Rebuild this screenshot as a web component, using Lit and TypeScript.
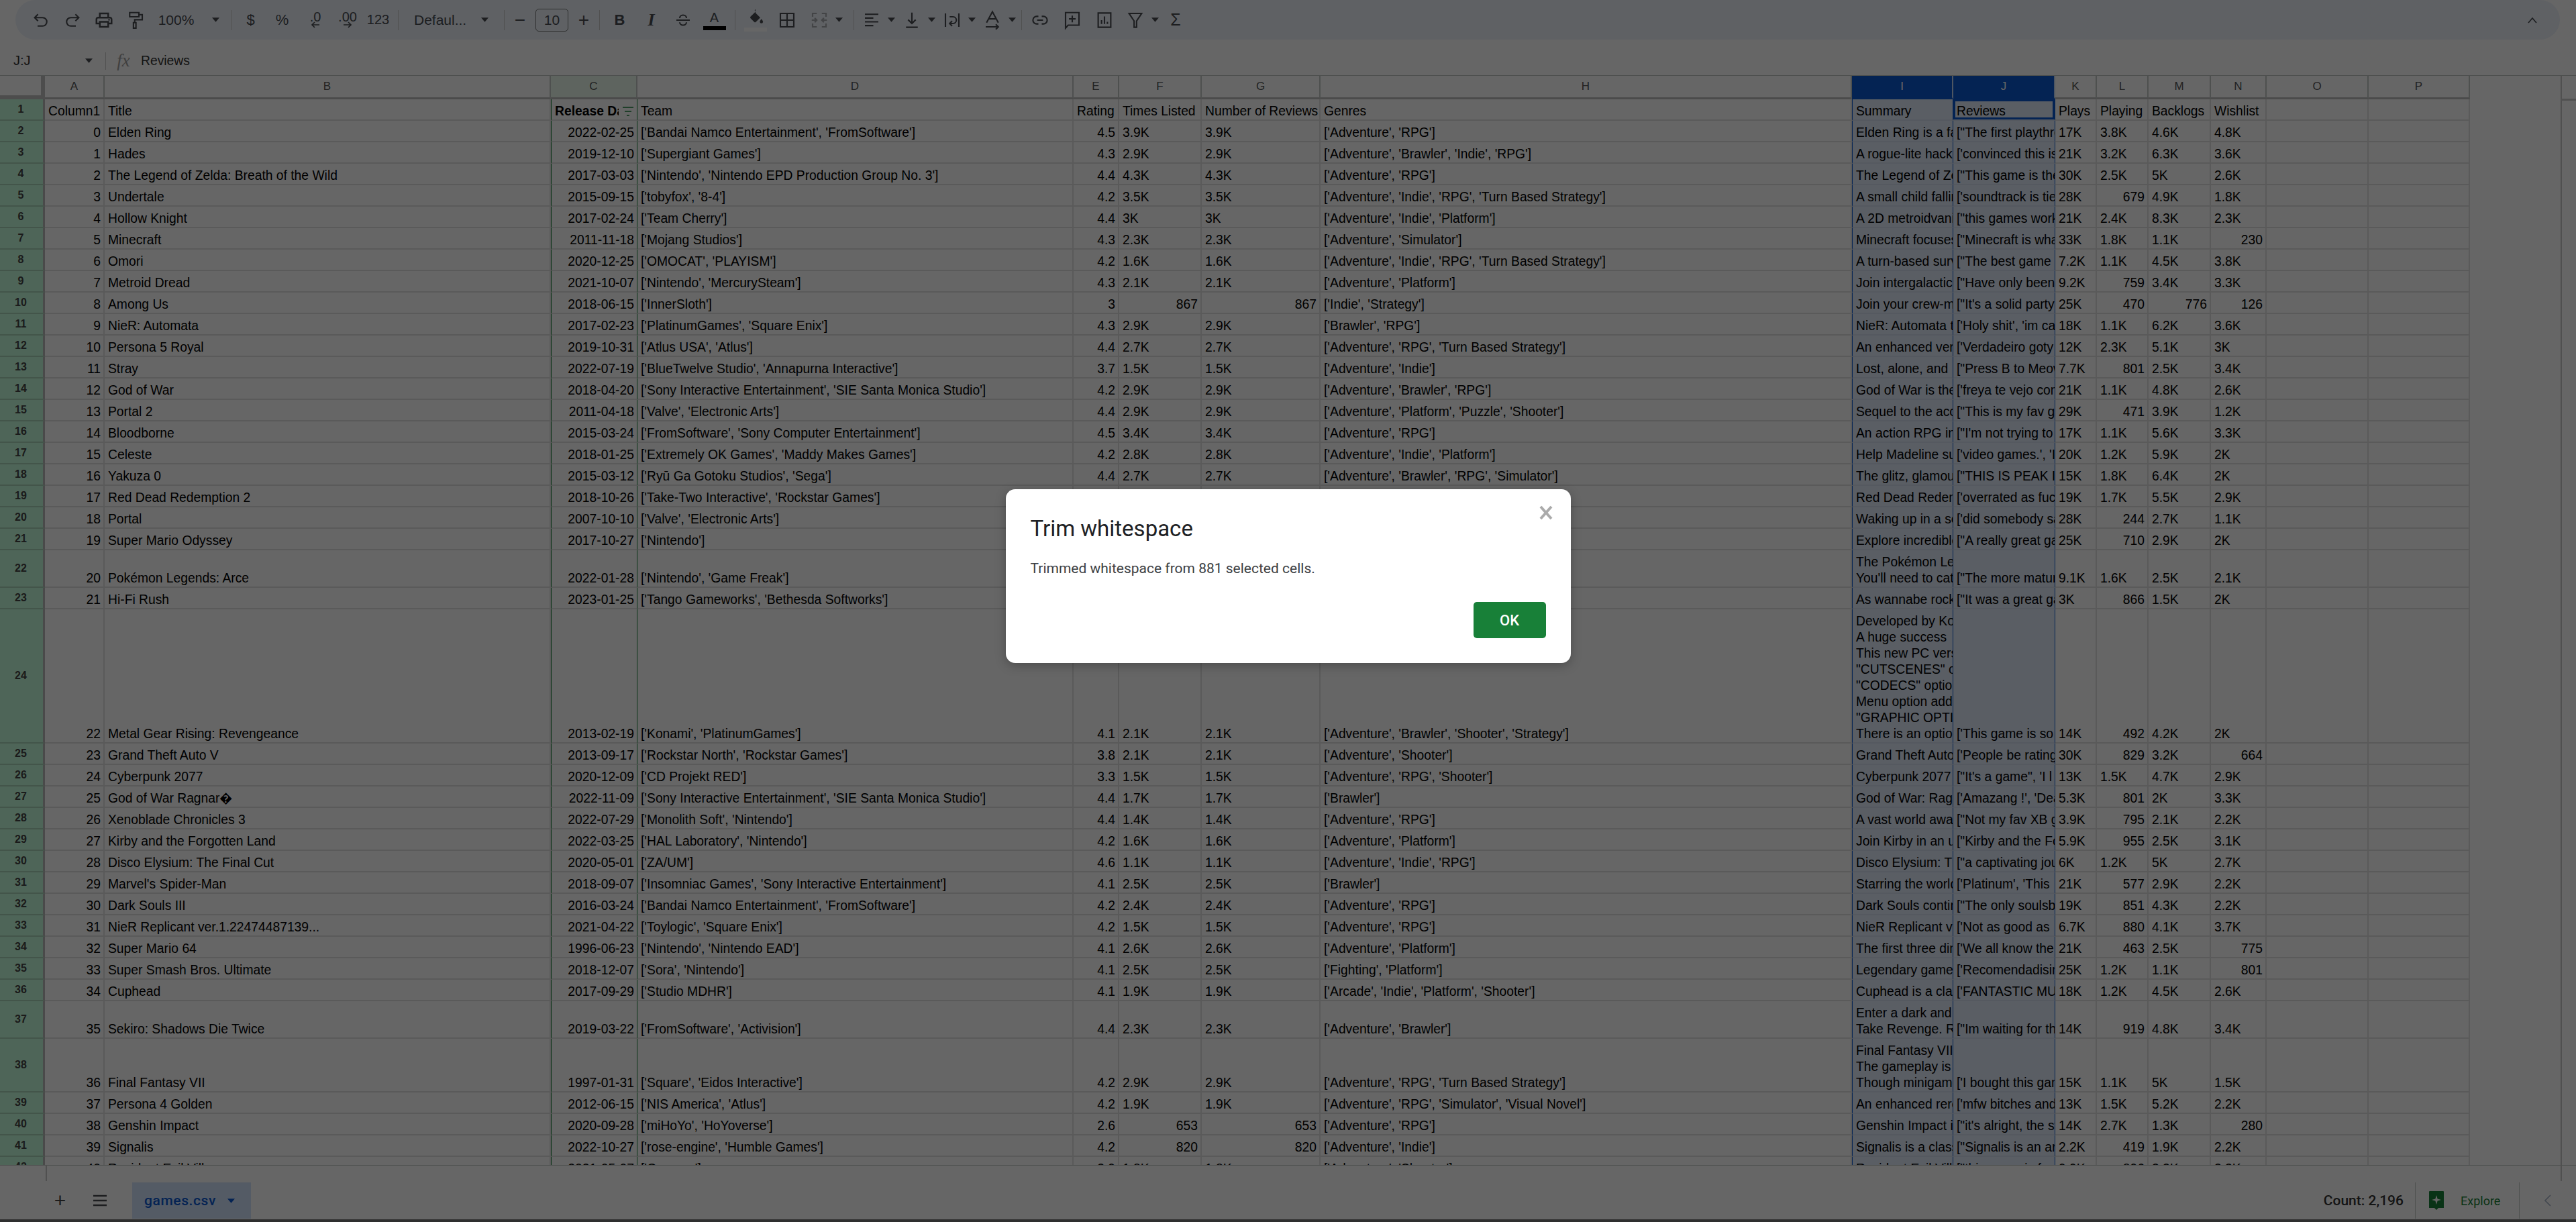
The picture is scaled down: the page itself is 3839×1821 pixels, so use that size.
import { LitElement, html, css, svg } from "lit";
import { customElement } from "lit/decorators.js";
import { classMap } from "lit/directives/class-map.js";

const LETTERS = "ABCDEFGHIJKLMNOP".split("");

// one line per sheet row, fields split by |, ¶ makes a multi-line summary
const RAW = `0|Elden Ring|2022-02-25|['Bandai Namco Entertainment', 'FromSoftware']|4.5|3.9K|3.9K|['Adventure', 'RPG']|Elden Ring is a fantasy|["The first playthrough|17K|3.8K|4.6K|4.8K
1|Hades|2019-12-10|['Supergiant Games']|4.3|2.9K|2.9K|['Adventure', 'Brawler', 'Indie', 'RPG']|A rogue-lite hack and|['convinced this is|21K|3.2K|6.3K|3.6K
2|The Legend of Zelda: Breath of the Wild|2017-03-03|['Nintendo', 'Nintendo EPD Production Group No. 3']|4.4|4.3K|4.3K|['Adventure', 'RPG']|The Legend of Zelda|["This game is the best|30K|2.5K|5K|2.6K
3|Undertale|2015-09-15|['tobyfox', '8-4']|4.2|3.5K|3.5K|['Adventure', 'Indie', 'RPG', 'Turn Based Strategy']|A small child falling|['soundtrack is tied|28K|679|4.9K|1.8K
4|Hollow Knight|2017-02-24|['Team Cherry']|4.4|3K|3K|['Adventure', 'Indie', 'Platform']|A 2D metroidvania|["this games works|21K|2.4K|8.3K|2.3K
5|Minecraft|2011-11-18|['Mojang Studios']|4.3|2.3K|2.3K|['Adventure', 'Simulator']|Minecraft focuses on|["Minecraft is what|33K|1.8K|1.1K|230
6|Omori|2020-12-25|['OMOCAT', 'PLAYISM']|4.2|1.6K|1.6K|['Adventure', 'Indie', 'RPG', 'Turn Based Strategy']|A turn-based survival|["The best game ever|7.2K|1.1K|4.5K|3.8K
7|Metroid Dread|2021-10-07|['Nintendo', 'MercurySteam']|4.3|2.1K|2.1K|['Adventure', 'Platform']|Join intergalactic|["Have only been|9.2K|759|3.4K|3.3K
8|Among Us|2018-06-15|['InnerSloth']|3|867|867|['Indie', 'Strategy']|Join your crew-mates|["It's a solid party|25K|470|776|126
9|NieR: Automata|2017-02-23|['PlatinumGames', 'Square Enix']|4.3|2.9K|2.9K|['Brawler', 'RPG']|NieR: Automata tells|['Holy shit', 'im can|18K|1.1K|6.2K|3.6K
10|Persona 5 Royal|2019-10-31|['Atlus USA', 'Atlus']|4.4|2.7K|2.7K|['Adventure', 'RPG', 'Turn Based Strategy']|An enhanced version|['Verdadeiro goty|12K|2.3K|5.1K|3K
11|Stray|2022-07-19|['BlueTwelve Studio', 'Annapurna Interactive']|3.7|1.5K|1.5K|['Adventure', 'Indie']|Lost, alone, and|["Press B to Meow|7.7K|801|2.5K|3.4K
12|God of War|2018-04-20|['Sony Interactive Entertainment', 'SIE Santa Monica Studio']|4.2|2.9K|2.9K|['Adventure', 'Brawler', 'RPG']|God of War is the|['freya te vejo com|21K|1.1K|4.8K|2.6K
13|Portal 2|2011-04-18|['Valve', 'Electronic Arts']|4.4|2.9K|2.9K|['Adventure', 'Platform', 'Puzzle', 'Shooter']|Sequel to the acclaimed|["This is my fav game|29K|471|3.9K|1.2K
14|Bloodborne|2015-03-24|['FromSoftware', 'Sony Computer Entertainment']|4.5|3.4K|3.4K|['Adventure', 'RPG']|An action RPG in|["I'm not trying to be|17K|1.1K|5.6K|3.3K
15|Celeste|2018-01-25|['Extremely OK Games', 'Maddy Makes Games']|4.2|2.8K|2.8K|['Adventure', 'Indie', 'Platform']|Help Madeline survive|['video games.', 'I|20K|1.2K|5.9K|2K
16|Yakuza 0|2015-03-12|['Ryū Ga Gotoku Studios', 'Sega']|4.4|2.7K|2.7K|['Adventure', 'Brawler', 'RPG', 'Simulator']|The glitz, glamour|["THIS IS PEAK I|15K|1.8K|6.4K|2K
17|Red Dead Redemption 2|2018-10-26|['Take-Two Interactive', 'Rockstar Games']|4.4|2.7K|2.7K|['Adventure', 'Shooter']|Red Dead Redemption|['overrated as fuck|19K|1.7K|5.5K|2.9K
18|Portal|2007-10-10|['Valve', 'Electronic Arts']|4.2|2.5K|2.5K|['Adventure', 'Platform']|Waking up in a seemingly|['did somebody say|28K|244|2.7K|1.1K
19|Super Mario Odyssey|2017-10-27|['Nintendo']|4.4|2.6K|2.6K|['Adventure', 'Platform']|Explore incredible|["A really great game|25K|710|2.9K|2K
20|Pokémon Legends: Arce|2022-01-28|['Nintendo', 'Game Freak']|4.1|1.6K|1.6K|['Adventure', 'RPG']|The Pokémon Legends¶You'll need to catch|["The more mature|9.1K|1.6K|2.5K|2.1K
21|Hi-Fi Rush|2023-01-25|['Tango Gameworks', 'Bethesda Softworks']|4.3|1.1K|1.1K|['Adventure', 'Brawler']|As wannabe rockstar|["It was a great game|3K|866|1.5K|2K
22|Metal Gear Rising: Revengeance|2013-02-19|['Konami', 'PlatinumGames']|4.1|2.1K|2.1K|['Adventure', 'Brawler', 'Shooter', 'Strategy']|Developed by Kojima¶A huge success ¶This new PC version¶"CUTSCENES" option¶"CODECS" option¶Menu option added¶"GRAPHIC OPTIONS"¶There is an option|['This game is so|14K|492|4.2K|2K
23|Grand Theft Auto V|2013-09-17|['Rockstar North', 'Rockstar Games']|3.8|2.1K|2.1K|['Adventure', 'Shooter']|Grand Theft Auto V|['People be rating|30K|829|3.2K|664
24|Cyberpunk 2077|2020-12-09|['CD Projekt RED']|3.3|1.5K|1.5K|['Adventure', 'RPG', 'Shooter']|Cyberpunk 2077 |["It's a game", 'I l|13K|1.5K|4.7K|2.9K
25|God of War Ragnar\uFFFD|2022-11-09|['Sony Interactive Entertainment', 'SIE Santa Monica Studio']|4.4|1.7K|1.7K|['Brawler']|God of War: Ragnarok|['Amazang !', 'Dead|5.3K|801|2K|3.3K
26|Xenoblade Chronicles 3|2022-07-29|['Monolith Soft', 'Nintendo']|4.4|1.4K|1.4K|['Adventure', 'RPG']|A vast world awaits|["Not my fav XB game|3.9K|795|2.1K|2.2K
27|Kirby and the Forgotten Land|2022-03-25|['HAL Laboratory', 'Nintendo']|4.2|1.6K|1.6K|['Adventure', 'Platform']|Join Kirby in an unknown|["Kirby and the Forgotten|5.9K|955|2.5K|3.1K
28|Disco Elysium: The Final Cut|2020-05-01|['ZA/UM']|4.6|1.1K|1.1K|['Adventure', 'Indie', 'RPG']|Disco Elysium: The|["a captivating journey|6K|1.2K|5K|2.7K
29|Marvel's Spider-Man|2018-09-07|['Insomniac Games', 'Sony Interactive Entertainment']|4.1|2.5K|2.5K|['Brawler']|Starring the world's|['Platinum', 'This |21K|577|2.9K|2.2K
30|Dark Souls III|2016-03-24|['Bandai Namco Entertainment', 'FromSoftware']|4.2|2.4K|2.4K|['Adventure', 'RPG']|Dark Souls continues|["The only soulsborne|19K|851|4.3K|2.2K
31|NieR Replicant ver.1.22474487139...|2021-04-22|['Toylogic', 'Square Enix']|4.2|1.5K|1.5K|['Adventure', 'RPG']|NieR Replicant ver|['Not as good as |6.7K|880|4.1K|3.7K
32|Super Mario 64|1996-06-23|['Nintendo', 'Nintendo EAD']|4.1|2.6K|2.6K|['Adventure', 'Platform']|The first three dimensional|['We all know the|21K|463|2.5K|775
33|Super Smash Bros. Ultimate|2018-12-07|['Sora', 'Nintendo']|4.1|2.5K|2.5K|['Fighting', 'Platform']|Legendary game |['Recomendadisimo|25K|1.2K|1.1K|801
34|Cuphead|2017-09-29|['Studio MDHR']|4.1|1.9K|1.9K|['Arcade', 'Indie', 'Platform', 'Shooter']|Cuphead is a classic|['FANTASTIC MUSIC|18K|1.2K|4.5K|2.6K
35|Sekiro: Shadows Die Twice|2019-03-22|['FromSoftware', 'Activision']|4.4|2.3K|2.3K|['Adventure', 'Brawler']|Enter a dark and ¶Take Revenge. Restore|["Im waiting for the|14K|919|4.8K|3.4K
36|Final Fantasy VII|1997-01-31|['Square', 'Eidos Interactive']|4.2|2.9K|2.9K|['Adventure', 'RPG', 'Turn Based Strategy']|Final Fantasy VII¶The gameplay is ¶Though minigames|['I bought this game|15K|1.1K|5K|1.5K
37|Persona 4 Golden|2012-06-15|['NIS America', 'Atlus']|4.2|1.9K|1.9K|['Adventure', 'RPG', 'Simulator', 'Visual Novel']|An enhanced rerelease|['mfw bitches and|13K|1.5K|5.2K|2.2K
38|Genshin Impact|2020-09-28|['miHoYo', 'HoYoverse']|2.6|653|653|['Adventure', 'RPG']|Genshin Impact is|["it's alright, the story|14K|2.7K|1.3K|280
39|Signalis|2022-10-27|['rose-engine', 'Humble Games']|4.2|820|820|['Adventure', 'Indie']|Signalis is a classic|["Signalis is an art|2.2K|419|1.9K|2.2K
40|Resident Evil Village|2021-05-07|['Capcom']|3.9|1.8K|1.8K|['Adventure', 'Shooter']|Resident Evil Village|["this game is fun|9.9K|896|3.3K|3.3K`;

const ROWS = RAW.split("\n").map((l) => l.split("|").map((c) => c.replace(/¶/g, "\n")));
const HEAD = ["Column1", "Title", "Release Date", "Team", "Rating", "Times Listed", "Number of Reviews", "Genres", "Summary", "Reviews", "Plays", "Playing", "Backlogs", "Wishlist", "", ""];

const ic = (body: unknown, size = 30) => html`<svg class="ico" width=${size} height=${size} viewBox="0 0 24 24">${body}</svg>`;

const caret = html`<svg class="caret" width="11" height="7" viewBox="0 0 10 6"><path d="M0 0h10L5 6z" /></svg>`;

const ICONS: Record<string, unknown> = {
  undo: ic(svg`<path class="ln" d="M8.5 5L4.5 9l4 4M4.5 9H14a5 5 0 0 1 0 10H8" />`),
  redo: ic(svg`<path class="ln" d="M15.5 5l4 4-4 4M19.5 9H10a5 5 0 0 0 0 10h6" />`),
  print: ic(svg`<path d="M19 8h-1V3H6v5H5c-1.66 0-3 1.34-3 3v6h4v4h12v-4h4v-6c0-1.66-1.34-3-3-3zM8 5h8v3H8V5zm8 14H8v-4h8v4zm2-4v-2H6v2H4v-4c0-.55.45-1 1-1h14c.55 0 1 .45 1 1v4h-2z" /><circle cx="18" cy="11.5" r="1" />`),
  paint: ic(svg`<path class="ln" d="M5 3h11v5H5zM16 5.5h4v6h-9V15M9.5 15h3v6.5h-3z" />`),
  borders: ic(svg`<path class="ln" d="M4 4h16v16H4zM12 4v16M4 12h16" />`),
  merge: ic(svg`<path class="ln dim" d="M4 8V4h5M15 4h5v4M4 16v4h5M15 20h5v-4M3 12h6M6.5 9.5L9 12l-2.5 2.5M21 12h-6M17.5 9.5L15 12l2.5 2.5" />`),
  fill: ic(svg`<path d="M12 1.5l-1.2 1.2 1.6 1.6L5.6 11c-.6.6-.6 1.5 0 2.1l4.7 4.7c.6.6 1.5.6 2.1 0l5.6-5.6-6-6z" /><path d="M19.5 14s-2 2.3-2 3.6a2 2 0 0 0 4 0c0-1.3-2-3.6-2-3.6z" />`, 28),
  halign: ic(svg`<path class="ln" d="M4 5h16M4 9.5h10M4 14h16M4 18.5h10" />`),
  valign: ic(svg`<path class="ln" d="M12 3v13M7.5 11.5L12 16l4.5-4.5M5 20.5h14" />`),
  wrap: ic(svg`<path class="ln" d="M4 4v16M20 4v16M9 8h4a3 3 0 0 1 0 8h-3M12 13l-3 3 3 3" />`),
  rotate: ic(svg`<path class="ln" d="M5 15L12 2l7 13M7.5 10.5h9M4 20h15M16 17l3 3-3 3" />`),
  link: ic(svg`<path class="ln" d="M10 7.5H8a4.5 4.5 0 0 0 0 9h2M14 7.5h2a4.5 4.5 0 0 1 0 9h-2M8.5 12h7" />`),
  comment: ic(svg`<path class="ln" d="M4 3h16v15H7l-3 3.5zM12 6.5v8M8 10.5h8" />`),
  chart: ic(svg`<path class="ln" d="M4.5 3.5h15v17h-15zM8.5 16.5V12M12 16.5V7.5M15.5 16.5v-2.5" />`),
  filter: ic(svg`<path class="ln" d="M4.5 4h15l-6 9v7.5h-3V13z" />`),
};

type Tool = { w: number; kind: "icon" | "sep" | "text" | "rich" | "size"; v?: string; caret?: boolean; cls?: string };

// widths follow the toolbar groups, left to right
const TOOLS: Tool[] = [
  { w: 47, kind: "icon", v: "undo" }, { w: 47, kind: "icon", v: "redo" }, { w: 47, kind: "icon", v: "print" }, { w: 47, kind: "icon", v: "paint" },
  { w: 113, kind: "text", v: "100%", caret: true },
  { w: 12, kind: "sep" },
  { w: 47, kind: "text", v: "$", cls: "sym" }, { w: 47, kind: "text", v: "%", cls: "sym" },
  { w: 52, kind: "rich", v: ".0" }, { w: 44, kind: "rich", v: ".00" },
  { w: 47, kind: "text", v: "123", cls: "num" },
  { w: 13, kind: "sep" },
  { w: 144, kind: "text", v: "Defaul...", caret: true, cls: "font" },
  { w: 14, kind: "sep" },
  { w: 34, kind: "text", v: "\u2212", cls: "pm" },
  { w: 61, kind: "size", v: "10" },
  { w: 34, kind: "text", v: "+", cls: "pm" },
  { w: 13, kind: "sep" },
  { w: 47, kind: "text", v: "B", cls: "bold" }, { w: 47, kind: "text", v: "I", cls: "ital" },
  { w: 47, kind: "rich", v: "strike" }, { w: 47, kind: "rich", v: "color" },
  { w: 14, kind: "sep" },
  { w: 47, kind: "rich", v: "fill" }, { w: 48, kind: "icon", v: "borders" }, { w: 68, kind: "icon", v: "merge", caret: true },
  { w: 14, kind: "sep" },
  { w: 60, kind: "icon", v: "halign", caret: true }, { w: 60, kind: "icon", v: "valign", caret: true },
  { w: 60, kind: "icon", v: "wrap", caret: true }, { w: 60, kind: "icon", v: "rotate", caret: true },
  { w: 6, kind: "sep" },
  { w: 49, kind: "icon", v: "link" }, { w: 48, kind: "icon", v: "comment" }, { w: 47, kind: "icon", v: "chart" },
  { w: 66, kind: "icon", v: "filter", caret: true },
  { w: 34, kind: "text", v: "\u03A3", cls: "sigma" },
];

@customElement("app-root")
export class AppRoot extends LitElement {
  static styles = css`
    :host {
      display: block;
      width: 100vw;
      height: 100vh;
      position: relative;
      overflow: hidden;
      background: #fff;
      font-family: "Liberation Sans", Arial, sans-serif;
      color: #000;
    }
    .app {
      height: 100%;
      display: flex;
      flex-direction: column;
    }
    svg path, svg circle { fill: #4a4d52; }
    svg .ln { fill: none; stroke: #4a4d52; stroke-width: 1.7; }
    svg .ln.dim { stroke: #a8abb0; }

    /* toolbar */
    .toolbar {
      flex: none;
      height: 59px;
      margin: 0 24px 0 23px;
      padding-left: 14px;
      padding-right: 32px;
      border-radius: 30px;
      background: #edf2fa;
      display: flex;
      align-items: center;
      color: #4a4d52;
      font-size: 21px;
    }
    .tool {
      flex: none;
      height: 44px;
      display: flex;
      align-items: center;
      justify-content: center;
      gap: 9px;
      position: relative;
    }
    .caret path { fill: #4a4d52; }
    .sep::after {
      content: "";
      width: 1px;
      height: 30px;
      background: #c7c7c7;
    }
    .sym { font-size: 22px; }
    .num { font-size: 20px; }
    .font { justify-content: space-between; padding: 0 16px 0 17px; box-sizing: border-box; }
    .tool.zoomer { gap: 27px; }
    .pm { font-size: 28px; }
    .bold { font-weight: 700; font-size: 22px; }
    .ital { font-family: "Liberation Serif", serif; font-style: italic; font-weight: 700; font-size: 26px; }
    .sigma { font-size: 25px; }
    .sizebox {
      width: 49px;
      height: 34px;
      border: 1px solid #747775;
      border-radius: 5px;
      box-sizing: border-box;
      display: flex;
      align-items: center;
      justify-content: center;
    }
    .dec {
      display: flex;
      flex-direction: column;
      align-items: center;
      line-height: 16px;
      font-size: 20px;
    }
    .dec svg { margin-top: -1px; }
    .stack {
      display: flex;
      flex-direction: column;
      align-items: center;
    }
    .stack .glyph { line-height: 24px; font-size: 20px; }
    .colorbar { width: 34px; height: 6px; background: #000; margin-top: 1px; }
    .fillbar { width: 34px; height: 6px; background: #fff; margin-top: 1px; }
    .chev { flex: none; margin-left: auto; }

    /* formula bar */
    .formula {
      flex: none;
      height: 54px;
      box-sizing: border-box;
      padding-top: 10px;
      border-bottom: 1px solid #c4c7c5;
      display: flex;
      align-items: center;
      font-size: 19.3px;
    }
    .namebox {
      width: 157px;
      box-sizing: border-box;
      padding: 0 19px 0 20px;
      display: flex;
      align-items: center;
      justify-content: space-between;
      color: #333;
      font-size: 20px;
    }
    .fsep { width: 1px; height: 26px; background: #c7c7c7; }
    .fx {
      width: 52px;
      text-align: center;
      font-family: "Liberation Serif", serif;
      font-style: italic;
      font-size: 27px;
      color: #a0a0a0;
    }
    .fval { color: #333; }

    /* sheet */
    .sheet {
      flex: 1;
      min-height: 0;
      overflow: hidden;
      position: relative;
    }
    .row {
      display: grid;
      grid-template-columns: 67px 89px 665px 129px 650px 68px 123px 177px 792px 151px 152px 62px 77px 93px 83px 152px 151px;
    }
    .colhead { height: 35px; }
    .colhead .ch {
      box-sizing: border-box;
      border-right: 2px solid #c4c7c5;
      border-bottom: 3px solid #bcbcbc;
      display: flex;
      align-items: center;
      justify-content: center;
      font-size: 17px;
      color: #555;
    }
    .ch.corner {
      background: #fff;
      border-right: 6px solid #c0c0c0;
      border-bottom: 6px solid #c0c0c0;
    }
    .ch.cf { background: #eafaee; }
    .ch.sel { background: #0b57d0; color: #fff; border-right-color: #c4d7f5; border-bottom-color: #0b57d0; }
    .rh {
      box-sizing: border-box;
      background: #c3fcdc;
      border-right: 3px solid #b9b9b9;
      border-bottom: 2px solid #a9d4ba;
      display: flex;
      align-items: center;
      justify-content: center;
      font-size: 16px;
      font-weight: 700;
      color: #444;
      padding-right: 2px;
    }
    .c {
      box-sizing: border-box;
      min-width: 0;
      overflow: hidden;
      border-right: 2px solid #e0e0e0;
      border-bottom: 2px solid #e0e0e0;
      padding: 0 4px 0 5px;
      display: flex;
      align-items: flex-end;
      font-size: 19.3px;
      line-height: 24px;
      white-space: pre;
    }
    .c.right { justify-content: flex-end; }
    .c.date { border-left: 1px solid #188038; border-right: 1px solid #188038; }
    .c.picked {
      background: #e0eafb;
      border-right: 1px solid #0b57d0;
      border-bottom-color: #d4dfef;
    }
    .c.first { border-left: 1px solid #0b57d0; }
    .c.active { box-shadow: inset 0 0 0 3px #0b57d0; padding-left: 5px; }
    .c.bold { font-weight: 700; gap: 5px; }
    .c.bold .t { flex: 1; min-width: 0; overflow: hidden; }
    .rail {
      position: absolute;
      top: 0;
      bottom: 0;
      left: 3816px;
      width: 2px;
      background: #c8c8c8;
    }
    .railcap {
      position: absolute;
      top: 34px;
      left: 3818px;
      right: 0;
      height: 3px;
      background: #c8c8c8;
    }

    /* bottom */
    .hscroll {
      flex: none;
      height: 24px;
      box-sizing: border-box;
      border-top: 1px solid #c4c7c5;
      position: relative;
    }
    .hscroll i {
      position: absolute;
      top: 0;
      bottom: 0;
      width: 2px;
      background: #c8c8c8;
    }
    .hscroll .l { left: 68px; }
    .hscroll .r { left: 3816px; }
    .tabs {
      flex: none;
      height: 57px;
      box-sizing: border-box;
      padding: 2px 0 1px 0;
      display: flex;
      align-items: stretch;
      color: #444;
    }
    .tabbtn {
      flex: none;
      width: 59px;
      display: flex;
      align-items: center;
      justify-content: center;
    }
    .add { margin-left: 60px; font-size: 30px; }
    .tab {
      flex: none;
      width: 177px;
      margin-left: 19px;
      box-sizing: border-box;
      background: #d3e3fd;
      color: #0b57d0;
      padding: 0 18px;
      display: flex;
      align-items: center;
      gap: 17px;
      font-family: Roboto, sans-serif;
      font-weight: 500;
      font-size: 21px;
      letter-spacing: 0.6px;
    }
    .tab .caret path { fill: #0b57d0; }
    .count {
      margin-left: auto;
      align-self: center;
      font-family: Roboto, sans-serif;
      font-weight: 500;
      font-size: 21px;
      color: #333;
      padding-right: 17px;
    }
    .explore {
      flex: none;
      width: 156px;
      box-sizing: border-box;
      border-left: 1px solid #c4c7c5;
      border-right: 1px solid #c4c7c5;
      padding-left: 19px;
      display: flex;
      align-items: center;
      gap: 24px;
      font-family: Roboto, sans-serif;
      font-size: 18px;
      color: #188038;
    }
    .explore svg path { fill: #188038; }
    .explore svg .star { fill: #fff; }
    .back {
      flex: none;
      width: 84px;
      display: flex;
      align-items: center;
      justify-content: center;
    }
    .back svg .ln { stroke: #a9b4c8; }
    .strip { flex: none; height: 4px; background: #747775; }

    /* dialog */
    .scrim {
      position: absolute;
      inset: 0;
      background: rgba(0, 0, 0, 0.6);
      display: flex;
      align-items: flex-start;
      justify-content: center;
      padding-top: 729px;
    }
    .dialog {
      position: relative;
      width: 842px;
      height: 259px;
      box-sizing: border-box;
      padding: 39px 37px 37px 37px;
      background: #fff;
      border-radius: 14px;
      box-shadow: 0 4px 16px rgba(0, 0, 0, 0.25);
      display: flex;
      flex-direction: column;
      font-family: Roboto, sans-serif;
    }
    .dialog h2 {
      margin: 0;
      font-size: 33px;
      line-height: 40px;
      font-weight: 400;
      color: #202124;
    }
    .dialog p {
      margin: 26px 0 0;
      font-size: 21px;
      line-height: 26px;
      color: #3c4043;
    }
    .close {
      position: absolute;
      top: 22px;
      right: 26px;
      width: 22px;
      height: 26px;
    }
    .close .ln { stroke: #aaa; stroke-width: 4; }
    .ok {
      margin-top: auto;
      align-self: flex-end;
      width: 108px;
      height: 54px;
      border: 0;
      border-radius: 5px;
      background: #188038;
      color: #fff;
      font-family: Roboto, sans-serif;
      font-weight: 500;
      font-size: 22px;
    }
  `;

  renderTool(t: Tool) {
    const width = `width:${t.w}px`;
    if (t.kind === "sep") return html`<div class="tool sep" style=${width}></div>`;
    if (t.kind === "icon")
      return html`<div class="tool" style=${width}>${ICONS[t.v!]}${t.caret ? caret : ""}</div>`;
    if (t.kind === "size")
      return html`<div class="tool" style=${width}><div class="sizebox">${t.v}</div></div>`;
    if (t.kind === "rich") return html`<div class="tool" style=${width}>${this.renderRich(t.v!)}</div>`;
    return html`<div class=${`tool ${t.cls ?? ""} ${t.v === "100%" ? "zoomer" : ""}`} style=${width}>
      <span>${t.v}</span>${t.caret ? caret : ""}
    </div>`;
  }

  renderRich(v: string) {
    if (v === ".0")
      return html`<div class="dec">.0
        <svg width="14" height="10" viewBox="0 0 14 10"><path class="ln" d="M13 5H2M6 1L2 5l4 4" /></svg></div>`;
    if (v === ".00")
      return html`<div class="dec">.00
        <svg width="14" height="10" viewBox="0 0 14 10"><path class="ln" d="M1 5h11M8 1l4 4-4 4" /></svg></div>`;
    if (v === "strike")
      return ic(svg`<path class="ln" d="M4 12h16M8 9.5a4 3.5 0 0 1 8 0M8 14.5a4 3.5 0 0 0 8 0" />`);
    if (v === "color")
      return html`<div class="stack"><span class="glyph">A</span><div class="colorbar"></div></div>`;
    return html`<div class="stack">${ICONS.fill}<div class="fillbar"></div></div>`;
  }

  renderCell(text: string, col: number, head: boolean) {
    const numeric = !head && (col === 2 || /^[\d.]+$/.test(text));
    const classes = {
      c: true,
      right: numeric,
      date: col === 2,
      picked: col === 8 || col === 9,
      first: col === 8,
      active: head && col === 9,
      bold: head && col === 2,
    };
    if (head && col === 2) {
      return html`<div class=${classMap(classes)}>
        <span class="t">${text}</span>
        <svg width="18" height="24" viewBox="0 0 18 24"><path class="ln" style="stroke:#188038" d="M1 6h16M4 12h10M7 18h4" /></svg>
      </div>`;
    }
    return html`<div class=${classMap(classes)}>${text}</div>`;
  }

  renderRow(cells: string[], num: number, head = false) {
    const lines = cells[8].split("\n").length;
    return html`<div class="row" style=${`height:${lines * 24 + 8}px`}>
      <div class="rh">${num}</div>
      ${cells.map((t, i) => this.renderCell(t, i, head))}
      ${cells.length < 16 ? html`<div class="c"></div><div class="c"></div>` : ""}
    </div>`;
  }

  render() {
    return html`
      <div class="app">
        <div class="toolbar">
          ${TOOLS.map((t) => this.renderTool(t))}
          <svg class="chev" width="18" height="12" viewBox="0 0 18 12"><path class="ln" d="M3 10l6-7 6 7" /></svg>
        </div>
        <div class="formula">
          <div class="namebox"><span>J:J</span>${caret}</div>
          <div class="fsep"></div>
          <div class="fx">fx</div>
          <div class="fval">Reviews</div>
        </div>
        <div class="sheet">
          <div class="row colhead">
            <div class="ch corner"></div>
            ${LETTERS.map(
              (l, i) => html`<div class=${classMap({ ch: true, cf: i === 2, sel: i === 8 || i === 9 })}>${l}</div>`
            )}
          </div>
          ${this.renderRow(HEAD, 1, true)}
          ${ROWS.map((r, i) => this.renderRow(r, i + 2))}
          <div class="rail"></div>
          <div class="railcap"></div>
        </div>
        <div class="hscroll"><i class="l"></i><i class="r"></i></div>
        <div class="tabs">
          <div class="tabbtn add">+</div>
          <div class="tabbtn">
            <svg width="24" height="22" viewBox="0 0 24 22"><path class="ln" style="stroke-width:2.4" d="M2 4h20M2 11h20M2 18h20" /></svg>
          </div>
          <div class="tab">games.csv ${caret}</div>
          <div class="count">Count: 2,196</div>
          <div class="explore">
            <svg width="24" height="30" viewBox="0 0 24 30"><path d="M2 1h20a1 1 0 0 1 1 1v24l-8 0-3 3-3-3H1V2a1 1 0 0 1 1-1z" /><path class="star" d="M12 7l1.6 5.4L19 14l-5.4 1.6L12 21l-1.6-5.4L5 14l5.4-1.6z" /></svg>
            <span>Explore</span>
          </div>
          <div class="back">
            <svg width="14" height="22" viewBox="0 0 14 22"><path class="ln" d="M11 3l-8 8 8 8" /></svg>
          </div>
        </div>
        <div class="strip"></div>
      </div>
      <div class="scrim">
        <div class="dialog">
          <svg class="close" viewBox="0 0 22 26"><path class="ln" d="M3 4l16 18M19 4L3 22" /></svg>
          <h2>Trim whitespace</h2>
          <p>Trimmed whitespace from 881 selected cells.</p>
          <button class="ok">OK</button>
        </div>
      </div>
    `;
  }
}
